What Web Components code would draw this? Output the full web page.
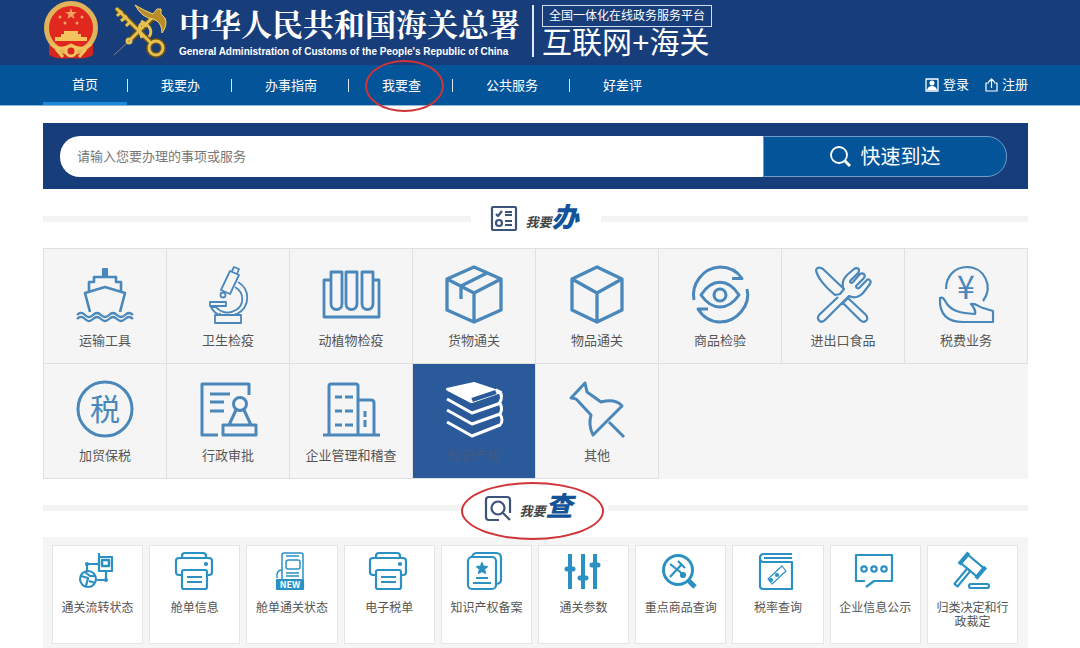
<!DOCTYPE html>
<html lang="zh-CN">
<head>
<meta charset="utf-8">
<meta name="viewport" content="width=device-width, initial-scale=1">
<title>互联网+海关</title>
<style>
body {
  margin: 0;
  background: #fff;
  color: #555;
  font: 13px/20px "Liberation Sans", "Noto Sans CJK SC", sans-serif;
  --navy: #173d7b;
  --blue: #04549a;
  --edge: #e0e0e0;
  --panel: #f5f5f5;
}
</style>
</head>
<body>
<customs-page></customs-page>

<script>
// icon drawings, tile icons use a 60 box and card icons a 40 box
const icons = {
  ship: `<path d="M14 26V17H19V12H41V17H46V26M15 47 10 28 30 22 50 28 45 47" stroke-width="2.600"/><path d="M28 4h4v8h-4z" fill="currentColor"/><path d="M2 50q4-4 8 0t8 0 8 0 8 0 8 0 8 0 8 0M2 54q4-4 8 0t8 0 8 0 8 0 8 0 8 0 8 0"/>`,
  microscope: `<g stroke-width="1.800"><path d="M32 6 41 10 32 29 23 25ZM34 6 36 2 41 4 39 9"/><circle cx="25" cy="30" r="2.500"/><path d="M40 17C52 24 53 41 39 49M37 22C47 28 46 40 38 45S22 47 18 42H13C15 46 17 48 20 49M12 37H28V41H12ZM17 50H43V58H17ZM22 50V48M38 50V48"/></g>`,
  tubes: `<path d="M9 15H3V52H58V15H52M10 7H21V39a5.500 5.500 0 0 1-11 0ZM25 7H36V39a5.500 5.500 0 0 1-11 0ZM41 7H52V39a5.500 5.500 0 0 1-11 0Z" stroke-width="2.800"/>`,
  parcel: `<g stroke-width="3.300"><path d="M30 2 57 14V45L30 57 3 45V14ZM3 14 30 28 57 14M30 28V57M43 8 17 21V34"/></g>`,
  cube: `<g stroke-width="3.300"><path d="M30 2 55 14V45L30 57 5 45V14ZM5 14 30 28 55 14M30 28V57"/></g>`,
  eye: `<g stroke-width="3"><path d="M4 35C1 20 12 3 30 2C39 2 47 6 52 13.500H42M57 24C61 40 47 57 30 57C21 57 13 52 8 44H18M11 30C22 13 38 13 49 30C38 46 22 46 11 30Z"/><circle cx="30" cy="30" r="6"/></g>`,
  cutlery: `<path d="M22 30C12 22 4 12 3 5C4 2 7 2 10 4L31 24 27 29ZM35 33 53 50C57 55 51 59 47 55L30 38ZM25 32 6 50C3 55 8 59 12 55L36 31C42 34 47 31 50 28L57 19C59 15 55 13 53 16L46 23C44 24 42 22 44 20L51 13C53 10 50 7 47 9L40 17C38 19 36 17 38 15L45 8C48 4 44 2 41 4L34 10C30 14 28 19 31 25"/>`,
  tax: `<path d="M10 24C10 12 18 2 31 2C48 2 58 21 47 36M4 33C7 31 9 36 11 39C16 46 24 48 39 49C40 45 38 43 35 39C40 38 43 42 47 43L57 46V57H27C12 57 3 50 4 33Z"/><text x="30" y="34" font-size="32" text-anchor="middle" fill="currentColor" stroke="none">¥</text>`,
  bonded: `<circle cx="30" cy="29" r="27" stroke-width="3"/><text x="30" y="40" font-size="30" text-anchor="middle" fill="currentColor" stroke="none">税</text>`,
  approve: `<g stroke-width="3"><path d="M51 15V4H4V55H20M12 14H32M12 22H26M12 31H26M38 30 31 45M46 30 53 45M25 45H58V55H25Z"/><circle cx="42" cy="24" r="6.500"/></g>`,
  company: `<g stroke-width="3"><path d="M8 55V6Q8 4 10 4H35Q37 4 37 6V55M37 20H50Q53 20 53 23V55M2 55H59M14 17H21M24 17H32M14 31H21M24 31H32M14 45H21M24 45H32M44 31V37M44 40V47"/></g>`,
  books: `<path d="M3 9 30 3 57 12 28 22Z" fill="currentColor"/><path d="M28 20 52 12" stroke="#2b5a9a" stroke-width="4"/><g stroke-width="3"><path d="M52 10Q59 12 57 20Q56 23 54 24L28 33 3 19M28 22 3 9M56 23Q59 29 56 34L28 44 3 30M56 34Q60 41 56 45L28 56 3 42"/></g>`,
  pin: `<g stroke-width="3"><path d="M18 3 4 18Q9 18 11 21L24 35C22 42 23 49 26 55L55 26C50 20 42 20 34 22L20 12ZM42 42 57 57"/></g>`,
  network: `<circle cx="10" cy="28" r="8"/><path d="M3 25 10 27 8 35M7 21 12 25 17 25M11 30 17 32M9 20V13H20M19 29H28V21M21 2V20H34V6H21"/><path d="M24 9H31V15H24Z" stroke-width="2.500"/><circle cx="9" cy="13" r="1"/><circle cx="28" cy="29" r="1"/>`,
  printer: `<path d="M7 7V5Q7 2 10 2H28Q31 2 31 5V7M7 24H4Q1 24 1 21V10Q1 7 4 7H34Q37 7 37 10V21Q37 24 34 24H32M9 19H30Q32 19 32 21V36Q32 38 30 38H9Q7 38 7 36V21Q7 19 9 19M12 26H27M12 31H27"/><circle cx="31" cy="13" r="1" fill="currentColor"/>`,
  newdoc: `<g stroke-width="1.500"><path d="M10 28V4Q10 2 12 2H29Q31 2 31 4V28M14 5H27M17 9H26Q28 9 28 11V16Q28 18 26 18H16Q14 18 14 16V11Q14 9 17 9M14 22H27M14 25H27M10 19Q4 19 5 27"/></g><path d="M5 29H31V38H5Z" fill="currentColor"/><text x="18" y="37" font-size="9" font-weight="700" text-anchor="middle" fill="#fff" stroke="none">NEW</text>`,
  patent: `<rect x="2" y="6" width="28" height="32" rx="4"/><path d="M6 6Q7 2 11 2H30Q35 2 35 7V29Q35 32 31 33M10 27H22M7 32H25"/><path d="m16 12 1.300 3.700H21L18 18 19.300 22 16 20 12.700 22 14 18 11 15.700h3.700z" fill="currentColor" stroke-width="1.800"/>`,
  sliders: `<g stroke-width="4"><path d="M6 3V38M19 3V38M31 3V38"/><path d="M3 18H9M16 27H22M28 14H34" stroke-width="5" stroke-linecap="round"/></g>`,
  lookup: `<circle cx="17" cy="19" r="14.500" stroke-width="3"/><path d="M28 30 34 36" stroke-width="5"/><path d="M9 13 23 24M9 26 21 13M17 10 24 17"/><circle cx="22" cy="24" r="2" fill="currentColor"/>`,
  rates: `<path d="M34 3H6Q2 3 2 7V35Q2 38 5 38H34V11H6Q2 11 2 7M6 7H34"/><path d="M10 28 24 15 28 20 14 33Z" stroke-width="1.200"/><circle cx="19" cy="24" r="1"/><circle cx="13" cy="29" r="1"/>`,
  chat: `<path d="M10 30H1V4H37V30H19L11 36"/><circle cx="9" cy="18" r="2.700"/><circle cx="19" cy="18" r="2.700"/><circle cx="29" cy="18" r="2.700"/>`,
  gavel: `<g transform="rotate(40 20 15)"><rect x="10" y="9" width="20" height="11"/><path d="M9 7V22M31 7V22" stroke-width="4"/><path d="M18 20H22V40H18Z"/></g><rect x="17" y="33" width="20" height="4" rx="2"/>`,
  list: `<rect x="1" y="1" width="24" height="23" rx="1"/><path d="M5 8 7 10 11 5M14 6H21M14 9H21M14 15H21M14 19H21"/><circle cx="8" cy="17" r="3"/>`,
  query: `<path d="M14 24H4Q1 24 1 21V4Q1 1 4 1H22Q25 1 25 4V17"/><circle cx="13" cy="12" r="6.500"/><path d="M18 17 25 24"/>`,
  search: `<circle cx="9" cy="9" r="8" stroke-width="1.800"/><path d="M15 15 20 20" stroke-width="3"/>`,
  user: `<rect x="1" y="1" width="12" height="12" stroke-width="1.300"/><circle cx="7" cy="5" r="2.500" fill="currentColor" stroke="none"/><path d="M2 12Q3 8 7 8T12 12Z" fill="currentColor" stroke="none"/>`,
  share: `<path d="M4 5H1V13H12V5H9M6.500 10V1M3.500 4 6.500 1 9.500 4" stroke-width="1.200"/>`,
  emblem: `<path d="M6 40V54Q14 59 28 57Q42 59 50 54V40Z" fill="#d6251f" stroke="none"/><circle cx="28" cy="27" r="24.500" fill="#e0281f" stroke="#e0b45a" stroke-width="5"/><path d="m28 7 1.300 4H34L30.300 13.500 31.500 18 28 15.500 24.500 18 25.700 13.500 22 11h4.700z" fill="#f3a35d" stroke="none"/><g fill="#f3a35d" stroke="none"><circle cx="17" cy="16" r="1.500"/><circle cx="39" cy="16" r="1.500"/><circle cx="22" cy="22" r="1.500"/><circle cx="34" cy="22" r="1.500"/></g><path d="M21 33V30H35V33H38V36H44V40H12V36H18V33Z" fill="#f3c45d" stroke="none"/><path d="M8 43Q17 51 28 44Q39 51 48 43M13 48 20 56M43 48 36 56" stroke="#f3c45d" stroke-width="3"/><circle cx="28" cy="50" r="5" fill="#d6251f" stroke="#f3c45d" stroke-width="3"/>`,
  keys: `<g stroke="#6b5018" stroke-width="6"><path d="M6 8 40 42M47 12 20 38"/><circle cx="45" cy="47" r="7"/></g><g stroke="#e6c14f" stroke-width="3"><path d="M5 7 40 42M11 10 6 15M16 15 10 20M20 20 15 25"/><circle cx="45" cy="47" r="7"/><path d="M46 12 20 38M36 25Q24 18 31 37M30 20Q44 27 38 36"/><circle cx="18" cy="40" r="2"/></g><path d="M15 43 3 54" stroke="#8b8371" stroke-width="1"/><path d="M24 4Q34 10 42 13L46 8 50 8 50 13 54 17Q57 24 51 32Q51 24 46 20L42 18Q31 17 24 4Z" fill="#b98c2b" stroke="#f0d46e" stroke-width="1"/>`
};

// attaches an open shadow root and fills it with the given style and html
class BaseElement extends HTMLElement {
  connectedCallback() {
    if (this.shadowRoot) return;
    const template = document.createElement("template");
    template.innerHTML = this.render();
    this.attachShadow({ mode: "open" });
    this.shadowRoot.appendChild(template.content.cloneNode(true));
  }
}

/**
 * <line-icon name width height>
 */
class LineIcon extends BaseElement {
  render() {
    const w = this.getAttribute("width");
    const h = this.getAttribute("height") || w;
    return `
    <style>
    :host { display: block; flex: none; width: ${w}px; height: ${h}px; }
    svg { display: block; overflow: visible; font-family: "Noto Sans CJK SC", sans-serif; }
    </style>
    <svg width="${w}" height="${h}" viewBox="0 0 ${w} ${h}" fill="none" stroke="currentColor"
      stroke-width="2.2" stroke-linejoin="round" aria-hidden="true">${icons[this.getAttribute("name")]}</svg>`;
  }
}

/**
 * Red ring drawn over whatever it wraps
 */
class RingMark extends BaseElement {
  render() {
    return `
    <style>
    :host { display: block; position: relative; }
    i {
      position: absolute;
      inset: var(--ring-inset);
      border: 2px solid #cf3437;
      border-radius: 50%;
      pointer-events: none;
      z-index: 1;
    }
    </style>
    <slot></slot><i></i>`;
  }
}

class SiteHeader extends BaseElement {
  render() {
    return `
    <style>
    :host {
      display: flex;
      height: 65px;
      box-sizing: border-box;
      padding: 0 52px 0 43px;
      background: var(--navy);
      color: #fff;
    }
    .logos { display: flex; gap: 12px; padding: 1px 12px 0 0; }
    h1 {
      margin: 0;
      font: 700 31px/46px "Noto Serif CJK SC", "Noto Sans CJK SC", serif;
      white-space: nowrap;
    }
    .name p { margin: 0; font: 700 10px/12px "Liberation Sans", sans-serif; white-space: nowrap; }
    .name { padding-right: 12px; }
    .platform {
      align-self: flex-start;
      margin-top: 5px;
      height: 52px;
      padding-left: 8px;
      border-left: 2px solid #dfe8f5;
      white-space: nowrap;
    }
    .platform span {
      display: block;
      border: 1px solid #cfdcee;
      padding: 0 6px;
      font-size: 12px;
      line-height: 20px;
    }
    .platform b { display: block; font-weight: 400; font-size: 30px; line-height: 32px; }
    </style>
    <div class="logos">
      <line-icon name="emblem" width="56" height="58"></line-icon>
      <line-icon name="keys" width="56" height="58"></line-icon>
    </div>
    <div class="name">
      <h1>中华人民共和国海关总署</h1>
      <p>General Administration of Customs of the People's Republic of China</p>
    </div>
    <div class="platform"><span>全国一体化在线政务服务平台</span><b>互联网+海关</b></div>`;
  }
}

class NavItem extends BaseElement {
  render() {
    return `
    <style>
    :host { display: flex; align-items: center; }
    :host::before { content: ""; width: 1px; height: 13px; background: #dce9f5; }
    :host([active])::before { display: none; }
    a {
      box-sizing: border-box;
      height: 40px;
      padding: 0 31px 0 33px;
      color: #fff;
      line-height: 42px;
      text-decoration: none;
      white-space: nowrap;
    }
    :host([active]) a { padding: 0 29px; line-height: 40px; border-bottom: 3px solid #1e88d8; }
    </style>
    <a href="#"><slot></slot></a>`;
  }
}

class SiteNav extends BaseElement {
  render() {
    return `
    <style>
    :host {
      display: flex;
      justify-content: space-between;
      padding: 0 52px 0 43px;
      background: var(--blue);
      border-bottom: 1px solid #8fb6d8;
    }
    nav, .account { display: flex; }
    ring-mark { --ring-inset: -5px 8px -7px 17px; }
    .account { gap: 16px; align-items: center; }
    .account a { display: flex; align-items: center; gap: 4px; color: #fff; text-decoration: none; }
    </style>
    <nav>
      <nav-item active>首页</nav-item>
      <nav-item>我要办</nav-item>
      <nav-item>办事指南</nav-item>
      <ring-mark><nav-item>我要查</nav-item></ring-mark>
      <nav-item>公共服务</nav-item>
      <nav-item>好差评</nav-item>
    </nav>
    <div class="account">
      <a href="#"><line-icon name="user" width="14"></line-icon>登录</a>
      <a href="#"><line-icon name="share" width="13" height="14"></line-icon>注册</a>
    </div>`;
  }
}

class SearchBar extends BaseElement {
  render() {
    return `
    <style>
    :host { display: block; margin-top: 17px; padding: 13px 21px 12px 17px; background: var(--navy); }
    form { display: flex; height: 41px; }
    input, button { box-sizing: border-box; margin: 0; font: inherit; }
    input {
      flex: 1;
      min-width: 0;
      border: 0;
      border-radius: 20px 0 0 20px;
      padding: 0 17px;
      background: #fff;
      outline: 0;
    }
    input::placeholder { color: #777; }
    button {
      display: flex;
      flex: 0 0 244px;
      align-items: center;
      justify-content: center;
      gap: 10px;
      border: 1px solid #6f9cc9;
      border-radius: 0 20px 20px 0;
      background: var(--blue);
      color: #fff;
      font-size: 20px;
    }
    </style>
    <form>
      <input type="text" aria-label="搜索事项或服务" placeholder="请输入您要办理的事项或服务">
      <button type="button"><line-icon name="search" width="21"></line-icon>快速到达</button>
    </form>`;
  }
}

/**
 * Section heading, the slotted last character is drawn large
 */
class SectionTitle extends BaseElement {
  render() {
    const ringed = this.hasAttribute("ringed");
    return `
    <style>
    :host { display: flex; align-items: center; height: 59px; }
    :host([ringed]) { height: 58px; }
    :host::before, :host::after { content: ""; flex: 1; height: 6px; background: #f3f3f3; }
    .title { display: flex; align-items: center; gap: 9px; padding: 0 22px 0 20px; color: #3c5479; }
    :host([ringed]) .title { padding: 0 35px 0 21px; }
    h2 {
      display: flex;
      align-items: baseline;
      margin: 0;
      color: #444;
      font: italic 700 13px/30px "Noto Sans CJK SC", sans-serif;
    }
    b { color: #12539a; font-size: 27px; font-weight: 900; }
    ring-mark { --ring-inset: -8px 4px -14px -3px; }
    </style>
    ${ringed ? "<ring-mark>" : ""}
    <div class="title">
      <line-icon name="${this.getAttribute("icon")}" width="26" height="25"></line-icon>
      <h2>我要<b><slot></slot></b></h2>
    </div>
    ${ringed ? "</ring-mark>" : ""}`;
  }
}

class ServiceTile extends BaseElement {
  render() {
    return `
    <style>
    :host { display: block; border: solid var(--edge); border-width: 0 1px 1px 0; }
    a {
      display: flex;
      flex-direction: column;
      align-items: center;
      gap: 6px;
      height: 98px;
      padding-top: 16px;
      color: #4a87bb;
      text-decoration: none;
    }
    span { color: #555; }
    :host([active]) a { background: #2b5a9a; color: #fff; }
    :host([active]) span { color: #44597d; }
    </style>
    <a href="#"><line-icon name="${this.getAttribute("icon")}" width="60"></line-icon><span><slot></slot></span></a>`;
  }
}

class QueryCard extends BaseElement {
  render() {
    return `
    <style>
    :host { display: block; border: 1px solid #e6e6e6; background: #fff; }
    a {
      display: flex;
      flex-direction: column;
      align-items: center;
      gap: 10px;
      height: 92px;
      padding: 5px 6px 0;
      color: #2b91c3;
      text-decoration: none;
    }
    span { color: #555; font-size: 12px; line-height: 14px; text-align: center; }
    </style>
    <a href="#"><line-icon name="${this.getAttribute("icon")}" width="40"></line-icon><span><slot></slot></span></a>`;
  }
}

class CustomsPage extends BaseElement {
  render() {
    const tiles = [
      ["ship", "运输工具"], ["microscope", "卫生检疫"], ["tubes", "动植物检疫"], ["parcel", "货物通关"],
      ["cube", "物品通关"], ["eye", "商品检验"], ["cutlery", "进出口食品"], ["tax", "税费业务"],
      ["bonded", "加贸保税"], ["approve", "行政审批"], ["company", "企业管理和稽查"], ["books", "知识产权"],
      ["pin", "其他"]
    ];
    const cards = [
      ["network", "通关流转状态"], ["printer", "舱单信息"], ["newdoc", "舱单通关状态"], ["printer", "电子税单"],
      ["patent", "知识产权备案"], ["sliders", "通关参数"], ["lookup", "重点商品查询"], ["rates", "税率查询"],
      ["chat", "企业信息公示"], ["gavel", "归类决定和行政裁定"]
    ];
    return `
    <style>
    :host { display: block; }
    main { padding: 0 52px 0 43px; }
    .tiles {
      display: grid;
      grid-template-columns: repeat(8, 1fr);
      border: solid var(--edge);
      border-width: 1px 0 0 1px;
      background: var(--panel);
    }
    .cards {
      display: grid;
      grid-template-columns: repeat(10, 1fr);
      gap: 6px;
      padding: 8px 10px 5px 9px;
      background: var(--panel);
    }
    </style>
    <site-header></site-header>
    <site-nav></site-nav>
    <main>
      <search-bar></search-bar>
      <section-title icon="list">办</section-title>
      <div class="tiles">
        ${tiles.map(([icon, name]) => `<service-tile icon="${icon}" ${icon === "books" ? "active" : ""}>${name}</service-tile>`).join("")}
      </div>
      <section-title icon="query" ringed>查</section-title>
      <div class="cards">
        ${cards.map(([icon, name]) => `<query-card icon="${icon}">${name}</query-card>`).join("")}
      </div>
    </main>`;
  }
}

customElements.define("line-icon", LineIcon);
customElements.define("ring-mark", RingMark);
customElements.define("site-header", SiteHeader);
customElements.define("nav-item", NavItem);
customElements.define("site-nav", SiteNav);
customElements.define("search-bar", SearchBar);
customElements.define("section-title", SectionTitle);
customElements.define("service-tile", ServiceTile);
customElements.define("query-card", QueryCard);
customElements.define("customs-page", CustomsPage);
</script>
</body>
</html>
